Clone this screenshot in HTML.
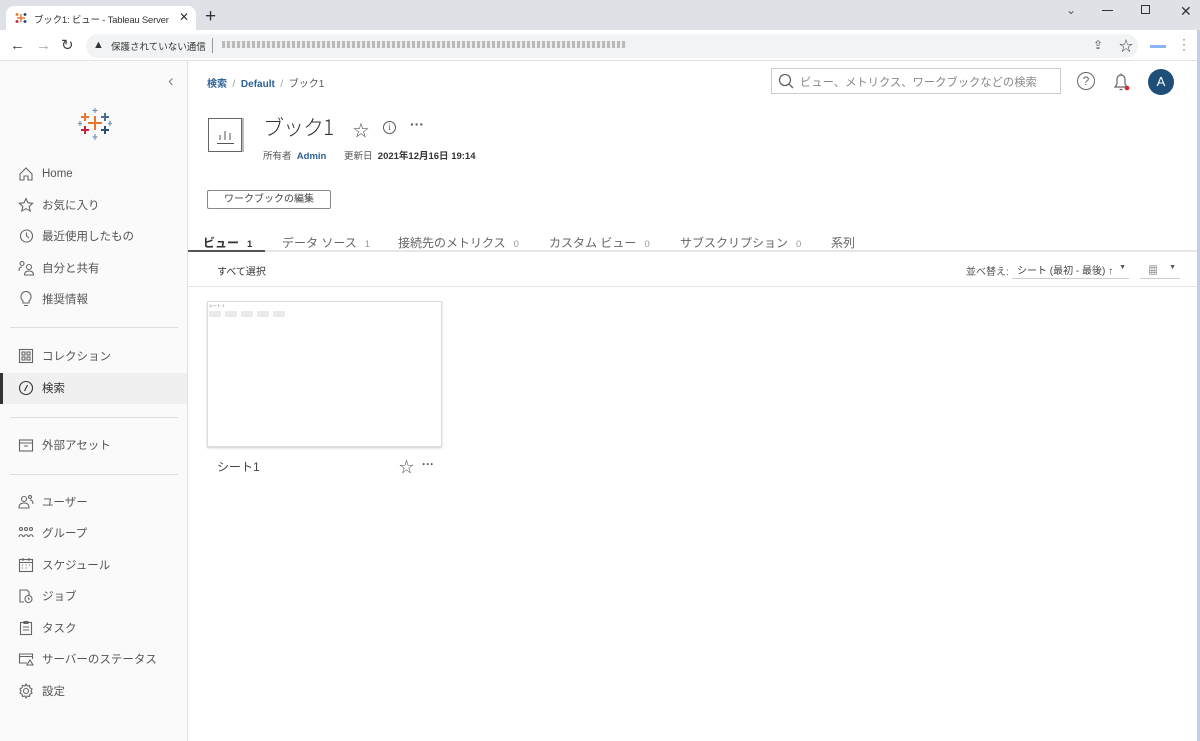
<!DOCTYPE html>
<html><head><meta charset="utf-8"><style>
*{box-sizing:border-box;margin:0;padding:0}
body{width:1200px;height:741px;overflow:hidden;font-family:"Liberation Sans","Noto Sans CJK JP",sans-serif;background:#fff;position:relative;color:#333}
.a{position:absolute;white-space:nowrap}
.tabbar{left:0;top:0;width:1200px;height:30px;background:#dee1e6}
.tab{left:6px;top:6px;width:190px;height:26px;background:#fff;border-radius:8px 8px 0 0}
.addr{left:0;top:30px;width:1200px;height:31px;background:#fff;border-bottom:1px solid #e3e3e3}
.omni{left:86px;top:34px;width:1052px;height:24px;background:#f1f3f4;border-radius:12px}
.side{left:0;top:61px;width:188px;height:680px;background:#fafafa;border-right:1px solid #e0e0e0}
.it{position:absolute;left:18px;font-size:11.5px;color:#555;display:flex;align-items:center;height:20px;white-space:nowrap}
.it svg{width:16px;height:16px;margin-right:8px;fill:none;stroke:#666;stroke-width:1.1}
.div{position:absolute;left:10px;width:168px;height:1px;background:#ddd}
.tb{font-size:12px;color:#666;top:234px}
.tb small{font-size:9.5px;color:#999;margin-left:8px}
</style></head><body>
<div class="a tabbar"></div>
<div class="a tab"></div>
<svg class="a" style="left:15px;top:12px" width="12" height="12" viewBox="0 0 12 12"><g stroke-width="1.4"><path d="M6 2v8M2 6h8" stroke="#e8762b"/><path d="M2 1v3M.5 2.5h3" stroke="#e8762b"/><path d="M10 1v3M8.5 2.5h3" stroke="#1f457e"/><path d="M2 8v3M.5 9.5h3" stroke="#c72037"/><path d="M10 8v3M8.5 9.5h3" stroke="#1f457e"/></g></svg>
<div class="a" style="left:34px;top:12px;font-size:9.5px;color:#333;letter-spacing:-.2px">ブック1: ビュー - Tableau Server</div>
<div class="a" style="left:179px;top:10px;font-size:12px;color:#333;background:#fff">✕</div>
<div class="a" style="left:205px;top:6px;font-size:19px;color:#333">+</div>
<div class="a" style="left:1066px;top:3px;font-size:12px;color:#555">⌄</div>
<div class="a" style="left:1102px;top:10px;width:11px;height:1px;background:#333"></div>
<div class="a" style="left:1141px;top:5px;width:9px;height:9px;border:1px solid #333"></div>
<div class="a" style="left:1180px;top:3px;font-size:14px;color:#333">✕</div>
<div class="a addr"></div>
<div class="a" style="left:10px;top:37px;font-size:15px;color:#444">←</div>
<div class="a" style="left:36px;top:37px;font-size:15px;color:#aaa">→</div>
<div class="a" style="left:61px;top:36px;font-size:15px;color:#444">↻</div>
<div class="a omni"></div>
<div class="a" style="left:93px;top:39px;font-size:11px;color:#333">▲</div>
<div class="a" style="left:111px;top:39px;font-size:9.5px;color:#333">保護されていない通信</div>
<div class="a" style="left:212px;top:38px;width:1px;height:15px;background:#999"></div>
<div class="a" style="left:222px;top:41px;width:405px;height:7px;background:repeating-linear-gradient(90deg,#bbb 0 3px,#eee 3px 5px)"></div>
<div class="a" style="left:1093px;top:38px;font-size:12px;color:#555">⇪</div>
<div class="a" style="left:1119px;top:36px;font-size:14px;color:#444">☆</div>
<div class="a" style="left:1150px;top:45px;width:16px;height:3px;background:#8ab4f8"></div>
<div class="a" style="left:1182px;top:37px;font-size:12px;color:#555;line-height:5px">·<br>·<br>·</div>
<div class="a" style="left:1197px;top:30px;width:3px;height:711px;background:#bcd0e6"></div>

<div class="a side">
<div class="a" style="left:168px;top:10px;font-size:17px;color:#888">‹</div>
<svg class="a" style="left:78px;top:47px" width="34" height="32" viewBox="0 0 34 32"><g stroke-width="2"><path d="M17 8v14M10 15h14" stroke="#e8762b"/><path d="M7 5v8M3 9h8" stroke="#e8762b"/><path d="M27 5v8M23 9h8" stroke="#4a6d94"/><path d="M7 18v8M3 22h8" stroke="#c72037"/><path d="M27 18v8M23 22h8" stroke="#2a4e7e"/></g><g stroke-width="1.2" stroke="#7b94b5"><path d="M17 0v5M14.5 2.5h5M17 26v6M14.5 29h5M2 13v5M0 15.5h4M32 13v5M30 15.5h4"/></g></svg>
<div class="it" style="top:103px"><svg viewBox="0 0 16 16"><path d="M2 8l6-6 6 6v6h-4v-4H6v4H2z"/></svg>Home</div>
<div class="it" style="top:134px"><svg viewBox="0 0 16 16"><path d="M8 1.5l2 4.3 4.6.5-3.4 3.1 1 4.6L8 11.7 3.8 14l1-4.6-3.4-3.1 4.6-.5z"/></svg>お気に入り</div>
<div class="it" style="top:165px"><svg viewBox="0 0 16 16"><circle cx="8.5" cy="8" r="6"/><path d="M8.5 4.5V8l2.5 2"/></svg>最近使用したもの</div>
<div class="it" style="top:197px"><svg viewBox="0 0 16 16"><circle cx="4" cy="3.5" r="2"/><circle cx="11" cy="7" r="2.5"/><path d="M6.5 15c0-3 2-4 4.5-4s4.5 1 4.5 4zM1 11c0-3 1-4 3-4"/></svg>自分と共有</div>
<div class="it" style="top:228px"><svg viewBox="0 0 16 16"><path d="M5 10c-2-2-2-3-2-4.5a5 5 0 0110 0c0 1.5 0 2.5-2 4.5v2H5zM6 14.5h4"/></svg>推奨情報</div>
<div class="div" style="top:266px"></div>
<div class="it" style="top:285px"><svg viewBox="0 0 16 16"><rect x="1.5" y="1.5" width="13" height="13"/><rect x="4" y="4" width="3" height="3"/><rect x="9" y="4" width="3" height="3"/><rect x="4" y="9" width="3" height="3"/><rect x="9" y="9" width="3" height="3"/></svg>コレクション</div>
<div class="a" style="left:0;top:312px;width:187px;height:31px;background:#f0f0f0;border-left:3px solid #333"></div>
<div class="it" style="top:317px;color:#333"><svg viewBox="0 0 16 16" style="stroke:#333"><circle cx="8" cy="8" r="6.5"/><path d="M9.5 5l-3 6"/></svg>検索</div>
<div class="div" style="top:356px"></div>
<div class="it" style="top:374px"><svg viewBox="0 0 16 16"><rect x="1.5" y="3" width="13" height="11"/><path d="M1.5 6h13M6 9h4"/></svg>外部アセット</div>
<div class="div" style="top:413px"></div>
<div class="it" style="top:431px"><svg viewBox="0 0 16 16"><circle cx="6" cy="5" r="2.5"/><circle cx="12" cy="3" r="1.5"/><path d="M1 14c0-4 2-5 5-5s5 1 5 5zM12 6c2 0 3 1 3 4"/></svg>ユーザー</div>
<div class="it" style="top:462px"><svg viewBox="0 0 16 16"><circle cx="3" cy="4" r="1.5"/><circle cx="8" cy="4" r="1.5"/><circle cx="13" cy="4" r="1.5"/><path d="M1 12c0-3 4-3 4 0M6 12c0-3 4-3 4 0M11 12c0-3 4-3 4 0"/></svg>グループ</div>
<div class="it" style="top:494px"><svg viewBox="0 0 16 16"><rect x="1.5" y="2.5" width="13" height="12"/><path d="M1.5 5.5h13M5 1v3M11 1v3M4 8h1M7.5 8h1M11 8h1M4 11h1M7.5 11h1"/></svg>スケジュール</div>
<div class="it" style="top:525px"><svg viewBox="0 0 16 16"><path d="M6 14H2V2h7l2 2v3"/><circle cx="10.5" cy="11" r="3.5"/><path d="M10.5 9.5V11h1.5"/></svg>ジョブ</div>
<div class="it" style="top:557px"><svg viewBox="0 0 16 16"><rect x="2.5" y="2.5" width="11" height="12"/><path d="M6 1.5h4v2H6zM5 7h6M5 10h6"/></svg>タスク</div>
<div class="it" style="top:588px"><svg viewBox="0 0 16 16"><path d="M9 12H1.5V3h13v5M1.5 5.5h13"/><path d="M12 9l3 5H9z"/></svg>サーバーのステータス</div>
<div class="it" style="top:620px"><svg viewBox="0 0 16 16"><circle cx="8" cy="8" r="2.5"/><path d="M8 1l1.2 2 2.3-.5.5 2.3 2 1.2-1 2 1 2-2 1.2-.5 2.3-2.3-.5L8 15l-1.2-2-2.3.5-.5-2.3-2-1.2 1-2-1-2 2-1.2.5-2.3 2.3.5z"/></svg>設定</div>
</div>

<div class="a" style="left:207px;top:75px;font-size:10px;color:#333"><span style="color:#2d6198;font-weight:bold">検索</span><span style="color:#999">&nbsp; / &nbsp;</span><span style="color:#2d6198;font-weight:bold">Default</span><span style="color:#999">&nbsp; / &nbsp;</span><span style="color:#555">ブック1</span></div>
<div class="a" style="left:771px;top:68px;width:290px;height:26px;border:1px solid #ccc"></div>
<svg class="a" style="left:778px;top:73px" width="16" height="16" viewBox="0 0 16 16" fill="none" stroke="#666" stroke-width="1.3"><circle cx="7" cy="7" r="5.5"/><path d="M11 11l4 4"/></svg>
<div class="a" style="left:800px;top:74px;font-size:11.3px;color:#888">ビュー、メトリクス、ワークブックなどの検索</div>
<div class="a" style="left:1077px;top:72px;width:18px;height:18px;border:1.2px solid #666;border-radius:50%;font-size:12px;color:#666;text-align:center;line-height:16px">?</div>
<svg class="a" style="left:1112px;top:71px" width="20" height="22" viewBox="0 0 20 22" fill="none" stroke="#666" stroke-width="1.2"><path d="M3 16h12l-2-3V8a4 4 0 00-8 0v5zM7.5 18.5h3"/><path d="M9 2.5v1.5"/><circle cx="15" cy="17" r="2.3" fill="#d62728" stroke="none"/></svg>
<div class="a" style="left:1148px;top:69px;width:26px;height:26px;border-radius:50%;background:#1f4e79;color:#fff;font-size:13px;text-align:center;line-height:26px">A</div>

<div class="a" style="left:208px;top:118px;width:34px;height:34px;border:1px solid #666;box-shadow:2px 0 0 #bbb"></div>
<svg class="a" style="left:216px;top:126px" width="20" height="20" viewBox="0 0 20 20" stroke="#555" stroke-width="1.3"><path d="M4 14V9M9 14V5M14 14V7M1 17.5h17" stroke-width="1"/></svg>
<div class="a" style="left:263px;top:112px;font-size:21px;color:#333;font-family:'Noto Sans CJK JP','Liberation Sans',sans-serif;font-weight:300;letter-spacing:-1px">ブック1</div>
<div class="a" style="left:353px;top:117px;font-size:16px;color:#555">☆</div>
<div class="a" style="left:383px;top:121px;width:13px;height:13px;border:1.2px solid #555;border-radius:50%;font-size:9px;text-align:center;line-height:11px;color:#555;font-family:serif">i</div>
<div class="a" style="left:410px;top:116px;font-size:14px;color:#555;font-weight:bold">···</div>
<div class="a" style="left:263px;top:148px;font-size:9.5px;color:#555">所有者&nbsp; <span style="color:#2d6198;font-weight:bold">Admin</span></div>
<div class="a" style="left:344px;top:148px;font-size:9.5px;color:#555">更新日&nbsp; <span style="color:#333;font-weight:bold">2021年12月16日 19:14</span></div>
<div class="a" style="left:207px;top:190px;width:124px;height:19px;border:1px solid #888;border-radius:2px;font-size:10px;color:#444;text-align:center;line-height:17px">ワークブックの編集</div>

<div class="a tb" style="left:203px;color:#333;font-weight:bold">ビュー<small style="color:#333">1</small></div>
<div class="a tb" style="left:282px">データ ソース<small>1</small></div>
<div class="a tb" style="left:398px">接続先のメトリクス<small>0</small></div>
<div class="a tb" style="left:549px">カスタム ビュー<small>0</small></div>
<div class="a tb" style="left:680px">サブスクリプション<small>0</small></div>
<div class="a tb" style="left:831px">系列</div>
<div class="a" style="left:188px;top:250px;width:1009px;height:2px;background:#e6e6e6"></div>
<div class="a" style="left:188px;top:250px;width:77px;height:2px;background:#555"></div>
<div class="a" style="left:217px;top:263px;font-size:10px;color:#333">すべて選択</div>
<div class="a" style="left:966px;top:263px;font-size:10px;color:#555">並べ替え:</div>
<div class="a" style="left:1012px;top:260px;width:117px;height:19px;border-bottom:1px solid #ccc;font-size:10px;color:#444;padding:2px 0 0 5px">シート (最初 - 最後) ↑<span style="position:absolute;right:3px;top:4px;font-size:7px;color:#555">▼</span></div>
<div class="a" style="left:1140px;top:260px;width:40px;height:19px;border-bottom:1px solid #ccc;font-size:10px;color:#555;padding:2px 0 0 8px">▦<span style="position:absolute;right:4px;top:4px;font-size:7px">▼</span></div>
<div class="a" style="left:188px;top:286px;width:1009px;height:1px;background:#e6e6e6"></div>

<div class="a" style="left:207px;top:301px;width:235px;height:146px;border:1px solid #ddd;box-shadow:0 1px 2px #ccc;background:#fff"></div>
<div class="a" style="left:209px;top:303px;font-size:4px;color:#777">シート 1</div>
<div class="a" style="left:209px;top:311px;width:80px;height:6px;background:repeating-linear-gradient(90deg,#ccc 0 12px,#fff 12px 16px);opacity:.4"></div>
<div class="a" style="left:217px;top:458px;font-size:12px;color:#444">シート1</div>
<div class="a" style="left:399px;top:456px;font-size:15px;color:#555">☆</div>
<div class="a" style="left:422px;top:457px;font-size:12px;color:#555;font-weight:bold">···</div>
</body></html>
